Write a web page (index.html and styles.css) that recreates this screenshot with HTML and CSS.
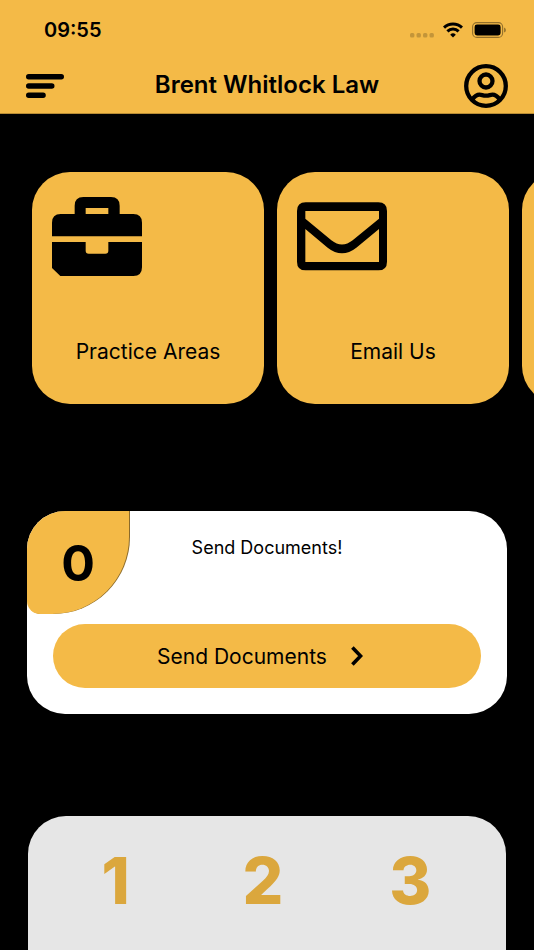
FILE: index.html
```html
<!DOCTYPE html>
<html lang="en">
<head>
    <meta charset="UTF-8">
    <meta name="viewport" content="width=device-width, initial-scale=1.0">
    <title>Brent Whitlock Law</title>
    <link rel="stylesheet" href="styles.css">
</head>
<body>
    <header class="header">
        <div class="status">
            <span class="time">09:55</span>
            <div class="status-icons">
                <svg class="dots" width="24" height="5" viewBox="0 0 24 5">
                    <rect x="0" y="0" width="4.400" height="4.600" rx="1.500"/>
                    <rect x="6.500" y="0" width="4.400" height="4.600" rx="1.500"/>
                    <rect x="13" y="0" width="4.400" height="4.600" rx="1.500"/>
                    <rect x="19.500" y="0" width="4.400" height="4.600" rx="1.500"/>
                </svg>
                <svg class="wifi" width="20" height="16" viewBox="0 0 20 16">
                    <path d="M1 5.600a12.800 12.800 0 0 1 18 0M4.400 9.400a8 8 0 0 1 11.200 0" fill="none" stroke="#000" stroke-width="3"/>
                    <path d="M10 15.600L7.200 12.700a4 4 0 0 1 5.600 0z"/>
                </svg>
                <svg class="battery" width="34" height="16" viewBox="0 0 34 16">
                    <rect x="0.6" y="0.6" width="30" height="14.8" rx="4.2" fill="none" stroke="#000" stroke-opacity="0.4" stroke-width="1.1"/>
                    <rect x="2.6" y="2.6" width="26" height="10.8" rx="2.4"/>
                    <path d="M32.2 5.4q1.6.6 1.6 2.6t-1.6 2.6z" fill-opacity="0.45"/>
                </svg>
            </div>
        </div>
        <div class="navbar">
            <button class="icon-btn" aria-label="Menu">
                <svg width="38" height="24" viewBox="0 0 38 24">
                    <path d="M2.7 2.7h32.6M2.7 12h23.1M2.7 21.3h14.4" stroke="#000" stroke-width="5.4" stroke-linecap="round"/>
                </svg>
            </button>
            <h1 class="title">Brent Whitlock Law</h1>
            <button class="icon-btn" aria-label="Account">
                <svg width="44" height="44" viewBox="0 0 44 44" fill="none" stroke="#000" stroke-width="4.3">
                    <circle cx="22" cy="22" r="19.8"/>
                    <circle cx="22" cy="17" r="6.5"/>
                    <path d="M8.2 35.6C10.3 32.6 12.8 30.6 15.6 30.6c2.2 0 3.2 1.1 6.4 1.1s4.2-1.1 6.4-1.1c2.8 0 5.3 2 7.4 5"/>
                </svg>
            </button>
        </div>
    </header>

    <main>
        <nav class="cards">
            <a class="card" href="#">
                <svg class="card-icon" viewBox="0 0 270 237">
                    <path fill-rule="evenodd" d="M68 51V26Q68 0 94 0H177Q203 0 203 26V51H244Q270 51 270 77V118H0V77Q0 51 26 51ZM101 33V51H169V33Z"/>
                    <path d="M0 135H101V161Q101 170 110 170H160Q169 170 169 161V135H270V211Q270 237 244 237H25L0 213Z"/>
                </svg>
                <span class="card-label">Practice Areas</span>
            </a>
            <a class="card" href="#">
                <svg class="card-icon" viewBox="0 0 270 237">
                    <path fill-rule="evenodd" d="M26 16H244Q270 16 270 42V194Q270 220 244 220H26Q0 220 0 194V42Q0 16 26 16ZM25 42V65L103 130Q135 155 167 130L246 65V42ZM25 96V195H246V96L178 152Q135 186 92 152Z"/>
                </svg>
                <span class="card-label">Email Us</span>
            </a>
            <div class="card" aria-hidden="true"></div>
        </nav>

        <section class="send">
            <div class="send-top">
                <div class="count">0</div>
                <p class="send-text">Send Documents!</p>
            </div>
            <button class="send-btn">
                Send Documents
                <svg width="12" height="20" viewBox="0 0 12 20">
                    <path d="M1.4 1.6L9.6 10L1.4 18.4" fill="none" stroke="#000" stroke-width="3.6"/>
                </svg>
            </button>
        </section>

        <section class="steps">
            <span>1</span>
            <span>2</span>
            <span>3</span>
        </section>
    </main>
</body>
</html>
```

FILE: styles.css
```css
*{
    margin: 0;
    padding: 0;
    box-sizing: border-box;
}
body{
    min-height: 100vh;
    display: flex;
    flex-direction: column;
    background-color: #000;
    color: #000;
    font-family: Inter, "Liberation Sans", sans-serif;
}
button{
    border: none;
    background: none;
    font-family: inherit;
    color: inherit;
    cursor: pointer;
}
svg{
    display: block;
    flex-shrink: 0;
}

/* header */
.header{
    background-color: #f4ba47;
    border-bottom: 1px solid #b98c34;
}
.status{
    height: 59px;
    padding: 0 28px 0 44px;
    display: flex;
    justify-content: space-between;
    align-items: center;
}
.time{
    font-size: 20px;
    font-weight: 600;
}
.status-icons{
    display: flex;
    align-items: center;
    gap: 9px;
}
.dots{
    align-self: flex-end;
    fill: #c39539;
}
.navbar{
    height: 54px;
    padding: 0 26px;
    display: grid;
    grid-template-columns: 44px 1fr 44px;
    align-items: center;
}
.title{
    padding-bottom: 3px;
    font-size: 24px;
    font-weight: 600;
    text-align: center;
}

/* cards */
main{
    flex: 1;
    display: flex;
    flex-direction: column;
}
.cards{
    margin-top: 58px;
    padding-left: 32px;
    display: flex;
    gap: 13px;
    overflow-x: auto;
    scrollbar-width: none;
}
.card{
    flex: 0 0 232px;
    height: 232px;
    padding: 25px 20px;
    display: flex;
    flex-direction: column;
    border-radius: 38px;
    background-color: #f4ba47;
    color: #000;
    text-decoration: none;
}
.card-icon{
    width: 90px;
    height: 79px;
}
.card-label{
    margin-top: 62px;
    font-size: 21px;
    line-height: 28px;
    text-align: center;
}

/* send documents */
.send{
    margin: 107px 27px 0;
    padding-bottom: 26px;
    border-radius: 38px;
    background-color: #fff;
    overflow: hidden;
}
.send-top{
    display: grid;
    grid-template-columns: 102px 1fr 102px;
}
.count{
    height: 103px;
    display: flex;
    justify-content: center;
    align-items: center;
    border-radius: 0 0 77px 13px;
    background-color: #f4ba47;
    box-shadow: 1px 0 0 #8a6a2a;
    font-size: 50px;
    font-weight: 700;
}
.send-text{
    padding-top: 25px;
    font-size: 18px;
    line-height: 24px;
    text-align: center;
}
.send-btn{
    width: calc(100% - 52px);
    height: 64px;
    margin: 10px 26px 0;
    padding-right: 14px;
    display: flex;
    justify-content: center;
    align-items: center;
    gap: 24px;
    border-radius: 32px;
    background-color: #f4ba47;
    font-size: 21px;
}

/* steps */
.steps{
    flex: 1;
    margin: 102px 28px 0;
    padding: 33px 22px 0 14px;
    display: grid;
    grid-template-columns: repeat(3, 1fr);
    border-radius: 38px 38px 0 0;
    background-color: #e6e6e6;
    color: #dba73d;
    font-size: 64px;
    font-weight: 800;
    line-height: 64px;
    text-align: center;
}
```
